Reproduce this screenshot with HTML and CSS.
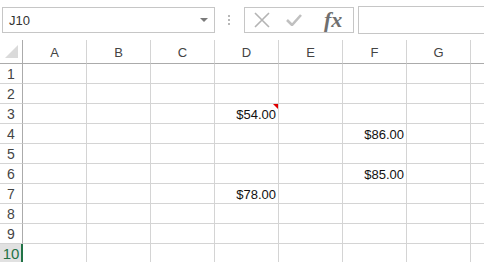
FILE: index.html
```html
<!DOCTYPE html>
<html lang="en">
<head>
    <meta charset="UTF-8">
    <title>Sheet</title>
    <link rel="stylesheet" href="styles.css">
</head>
<body>
    <div class="toolbar">
        <div class="namebox">
            <span>J10</span>
            <span class="arrow"></span>
        </div>
        <div class="grip"><i></i><i></i><i></i></div>
        <div class="fxbox">
            <svg class="icon" width="16" height="16" viewBox="0 0 16 16">
                <path d="M1 1 L15 15 M15 1 L1 15" stroke="#b4b4b4" stroke-width="1.6" fill="none"/>
            </svg>
            <svg class="icon" width="16" height="12" viewBox="0 0 16 12">
                <path d="M1 6 L6 11 L15 1" stroke="#c0c0c0" stroke-width="2.6" fill="none"/>
            </svg>
            <span class="fx">fx</span>
        </div>
        <div class="formula"></div>
    </div>

    <div class="sheet">
        <div class="corner"><span class="tri"></span></div>
        <div class="colhead">A</div>
        <div class="colhead">B</div>
        <div class="colhead">C</div>
        <div class="colhead">D</div>
        <div class="colhead">E</div>
        <div class="colhead">F</div>
        <div class="colhead">G</div>
        <div class="colhead last"></div>
    </div>

    <script>
        const sheet = document.querySelector(".sheet");
        const values = {
            "3-3": "$54.00",
            "4-5": "$86.00",
            "6-5": "$85.00",
            "7-3": "$78.00"
        };

        for (let r = 1; r <= 10; r++) {
            const head = document.createElement("div");
            head.className = r === 10 ? "rowhead active" : "rowhead";
            head.textContent = r;
            sheet.appendChild(head);

            for (let c = 0; c < 8; c++) {
                const cell = document.createElement("div");
                cell.className = c === 7 ? "cell last" : "cell";
                const v = values[r + "-" + c];
                if (v) cell.textContent = v;
                if (r === 3 && c === 3) {
                    const note = document.createElement("span");
                    note.className = "note";
                    cell.appendChild(note);
                }
                sheet.appendChild(cell);
            }
        }
    </script>
</body>
</html>
```

FILE: styles.css
```css
body {
    margin: 0;
    background-color: #fff;
    font-family: "Liberation Sans", Arial, sans-serif;
    font-size: 13px;
    color: #222;
    overflow: hidden;
}

.toolbar {
    display: flex;
    align-items: center;
    height: 40px;
    padding-left: 2px;
    overflow: hidden;
}

.namebox {
    display: flex;
    align-items: center;
    justify-content: space-between;
    box-sizing: border-box;
    width: 213px;
    height: 26px;
    padding: 0 6px 0 6px;
    border: 1px solid #c6c6c6;
    color: #333;
}

.arrow {
    width: 0;
    height: 0;
    border-left: 4px solid transparent;
    border-right: 4px solid transparent;
    border-top: 4px solid #7a7a7a;
}

.grip {
    display: flex;
    flex-direction: column;
    gap: 2px;
    margin: 0 14px 0 13px;
}

.grip i {
    display: block;
    width: 2px;
    height: 2px;
    background-color: #b8b8b8;
}

.fxbox {
    display: flex;
    align-items: center;
    flex-shrink: 0;
    box-sizing: border-box;
    width: 110px;
    height: 26px;
    padding-left: 9px;
    border: 1px solid #c6c6c6;
}

.icon {
    margin-right: 16px;
}

.fx {
    font-family: "Liberation Serif", "Times New Roman", serif;
    font-style: italic;
    font-weight: bold;
    font-size: 22px;
    line-height: 24px;
    color: #6f6f6f;
    margin-left: 6px;
}

.formula {
    flex: 1;
    height: 26px;
    margin-left: 4px;
    border: 1px solid #c6c6c6;
    border-right: none;
}

.sheet {
    display: grid;
    grid-template-columns: 23px repeat(7, 64px) 1fr;
    grid-template-rows: 24px repeat(10, 20px);
    width: 484px;
}

.corner,
.colhead,
.rowhead,
.cell {
    box-sizing: border-box;
    border-right: 1px solid #d4d4d4;
    border-bottom: 1px solid #d4d4d4;
}

.colhead.last,
.cell.last {
    border-right: none;
}

.corner {
    position: relative;
    border-right-color: #ababab;
    border-bottom-color: #ababab;
}

.tri {
    position: absolute;
    left: 5px;
    bottom: 5px;
    width: 0;
    height: 0;
    border-left: 13px solid transparent;
    border-bottom: 13px solid #dadada;
}

.colhead {
    display: flex;
    align-items: center;
    justify-content: center;
    padding-top: 2px;
    border-bottom-color: #ababab;
    color: #444;
}

.rowhead {
    display: flex;
    align-items: center;
    justify-content: center;
    border-right-color: #ababab;
    color: #444;
    font-size: 14px;
}

.rowhead.active {
    background-color: #e1e1e1;
    border-right: 2px solid #217346;
    color: #217346;
    font-size: 15px;
    padding-left: 1px;
}

.cell {
    position: relative;
    text-align: right;
    padding-right: 2px;
    line-height: 22px;
    color: #111;
}

.note {
    position: absolute;
    top: 0;
    right: 0;
    width: 0;
    height: 0;
    border-left: 5px solid transparent;
    border-top: 5px solid #e00000;
}
```
